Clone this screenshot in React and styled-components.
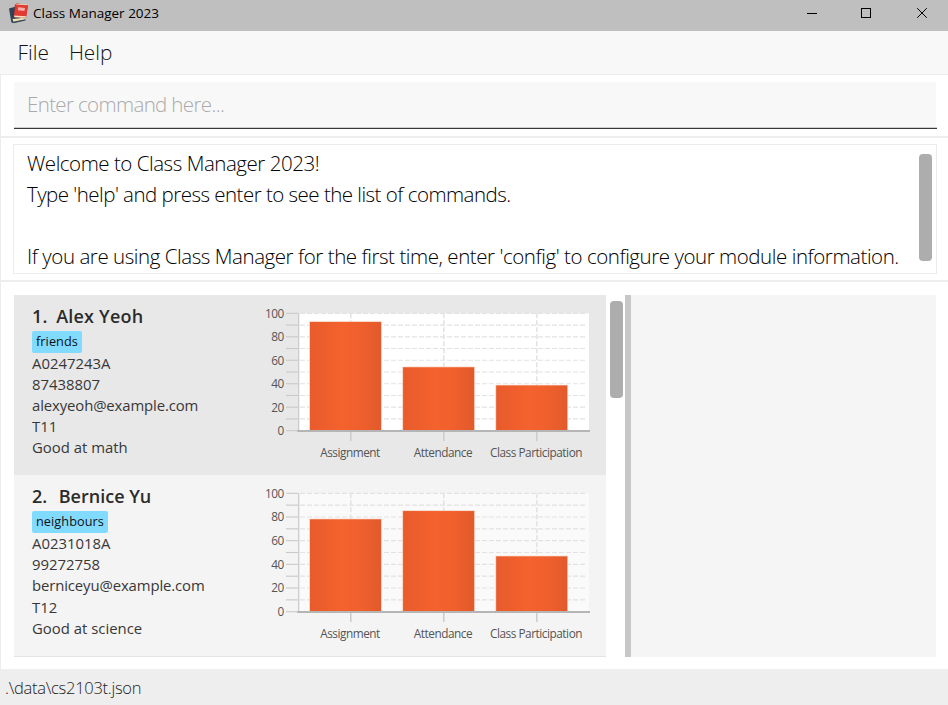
import React from 'react';
import styled, { createGlobalStyle } from 'styled-components';

const GlobalStyle = createGlobalStyle`
  * { box-sizing: border-box; }
  body {
    margin: 0;
    overflow: hidden;
    background: #fff;
    font-family: "Open Sans", "Noto Sans", sans-serif;
    color: #222;
  }
`;

const Window = styled.div`
  display: flex;
  flex-direction: column;
  width: 948px;
  height: 705px;
  background: #fff;
`;

const TitleBar = styled.header`
  display: flex;
  align-items: center;
  flex: 0 0 31px;
  padding: 0 20px 4px 8px;
  background: #bfbfbf;
`;

const AppTitle = styled.h1`
  flex: 1;
  margin: 0 0 0 4px;
  font-size: 13.5px;
  font-weight: 400;
  line-height: 27px;
  color: #000;
`;

const WindowControls = styled.div`
  display: grid;
  grid-template-columns: 54px 56px 11px;
`;

const MenuBar = styled.nav`
  display: flex;
  gap: 20px;
  flex: 0 0 44px;
  padding: 0 17.6px;
  background: #f8f8f8;
  border-bottom: 1px solid #ededed;
`;

const MenuItem = styled.span`
  font-size: 20.8px;
  font-weight: 300;
  line-height: 43px;
  color: #111;
`;

const Body = styled.main`
  display: flex;
  flex-direction: column;
  flex: 0 0 594px;
  border-left: 1px solid #ededed;
`;

const CommandSection = styled.section`
  flex: 0 0 63px;
  padding: 7px 11px 0 13px;
  border-bottom: 2px solid #eee;
`;

const CommandField = styled.div`
  height: 47px;
  padding: 0 13px;
  background: linear-gradient(#f8f8f8, #f8f8f8) no-repeat 0 0 / calc(100% - 1px) 100%;
  border-bottom: 1px solid #383838;
  box-shadow: inset 0 -1px 0 #cfcfcf;
  font-size: 20.5px;
  font-weight: 300;
  line-height: 44px;
  letter-spacing: -0.64px;
  color: #aaa;
`;

const ResultSection = styled.section`
  flex: 0 0 144px;
  padding: 6px 11px 0 12px;
  border-bottom: 2px solid #eee;
`;

const ResultBox = styled.div`
  display: flex;
  justify-content: space-between;
  height: 130px;
  padding: 3px 4px 0 13px;
  border: 1px solid #ececec;
`;

const ResultText = styled.div`
  font-size: 20.5px;
  font-weight: 300;
  color: #000;
`;

const ResultLine = styled.p`
  height: 31px;
  margin: 0;
  line-height: 31px;
  letter-spacing: ${(p) => p.$tracking}px;
  white-space: pre;
`;

const ScrollThumb = styled.div`
  width: 13px;
  height: ${(p) => p.$length}px;
  margin-top: ${(p) => p.$offset}px;
  border-radius: 4px;
  background: #adadad;
`;

const SplitView = styled.section`
  display: flex;
  height: 375px;
  padding: 13px 12px 0 13px;
`;

const StudentList = styled.div`
  flex: 0 0 592px;
  height: 362px;
`;

const ListScroll = styled.div`
  display: flex;
  justify-content: center;
  flex: 0 0 19px;
  padding-left: 1px;
`;

const Divider = styled.div`
  flex: 0 0 6px;
  height: 362px;
  background: #c7c7c7;
`;

const DetailPanel = styled.aside`
  flex: 1;
  height: 362px;
  background: #f5f5f5;
`;

const Card = styled.article`
  display: flex;
  height: ${(p) => (p.$selected ? 180 : 182)}px;
  padding-left: 18px;
  background: ${(p) => (p.$selected ? '#e8e8e8' : '#f4f4f4')};
  border-bottom: ${(p) => (p.$selected ? 'none' : '1px solid #e4e4e4')};
`;

const CardInfo = styled.div`
  flex: 0 0 228px;
  padding-top: 9px;
`;

const StudentName = styled.h2`
  display: flex;
  gap: ${(p) => p.$gap}px;
  margin: 0 0 3px;
  font-size: 18px;
  font-weight: 600;
  line-height: 24px;
  letter-spacing: ${(p) => p.$tracking}px;
  color: #2b2b2b;
`;

const Tag = styled.span`
  display: block;
  width: fit-content;
  height: 22px;
  padding: 0 4px;
  border-radius: 2px;
  background: #81dbff;
  font-size: 12.7px;
  line-height: 21px;
  letter-spacing: 0.08px;
  color: #111;
`;

const InfoLine = styled.p`
  margin: 0;
  font-size: 14.9px;
  line-height: ${(p) => p.$pitch}px;
  letter-spacing: ${(p) => (p.$tight ? -0.12 : 0)}px;
  color: #383838;
`;

const ChartSvg = styled.svg`
  display: block;
  width: 346px;
  height: 180px;
`;

const ChartLabel = styled.text`
  font-size: 11.8px;
  letter-spacing: -0.46px;
  fill: #555;
`;

const StatusBar = styled.footer`
  flex: 1;
  padding-left: 5px;
  background: #eee;
  font-size: 16.5px;
  font-weight: 300;
  line-height: 37px;
  letter-spacing: -0.28px;
  color: #222;
`;

const categories = ['Assignment', 'Attendance', 'Class Participation'];

const students = [
  {
    name: 'Alex Yeoh',
    gap: 8.6,
    tracking: 0.2,
    tag: 'friends',
    lines: ['A0247243A', '87438807', 'alexyeoh@example.com', 'T11', 'Good at math'],
    pitch: 21,
    scores: [92.6, 54, 38.5],
    base: 135.7,
    selected: true,
  },
  {
    name: 'Bernice Yu',
    gap: 11.5,
    tracking: 0,
    tag: 'neighbours',
    lines: ['A0231018A', '99272758', 'berniceyu@example.com', 'T12', 'Good at science'],
    pitch: 21.2,
    scores: [78, 85, 46.7],
    base: 136.7,
    selected: false,
  },
];

function BooksIcon() {
  return (
    <svg width="21" height="21" viewBox="0 0 21 21">
      <path d="M1 5.5 L8 3.5 L13 18 L5 20 Q3.5 20 3.2 18.5 Z" fill="#2f4358" />
      <path d="M4.5 16 L15 15 L17.5 16.5 L5.5 19.5 Z" fill="#f3dfb0" />
      <path d="M4.8 18.8 L17.5 16.2 L17.5 17.4 L5.5 20.2 Z" fill="#35485a" />
      <path d="M6.8 2.3 L8.4 0.3 L20 2.2 L18 15 L6 14.2 Z" fill="#b92f2a" />
      <path d="M7.8 1.5 L20 2.2 L18.2 13.2 L6.2 12.5 Z" fill="#e23b32" />
      <path d="M6 12.6 L18.2 13.3 L17.8 14.8 L6.5 14.2 Z" fill="#f5e5c6" />
      <path d="M10.3 4.3 L17 4.9 L16.5 7.9 L9.9 7.3 Z" fill="#f0b0a8" />
      <path d="M8.2 0.7 L18.8 1.4 L19.6 2.3 L8 1.6 Z" fill="#f5e5c6" />
    </svg>
  );
}

function MinimizeIcon() {
  return (
    <svg width="11" height="11" viewBox="0 0 11 11">
      <path d="M0 5.5 H10" stroke="#000" />
    </svg>
  );
}

function MaximizeIcon() {
  return (
    <svg width="11" height="11" viewBox="0 0 11 11">
      <rect x="0.5" y="0.5" width="9" height="9" fill="none" stroke="#000" />
    </svg>
  );
}

function CloseIcon() {
  return (
    <svg width="11" height="11" viewBox="0 0 11 11">
      <path d="M0.2 0.2 L9.8 9.8 M9.8 0.2 L0.2 9.8" stroke="#000" />
    </svg>
  );
}

function ScoreChart({ scores, base, selected }) {
  const top = 18.3;
  const left = 39;
  const right = 329;
  const step = (base - top) / 10;
  const gradientId = `bar-${selected ? 'selected' : 'plain'}`;
  const rows = Array.from({ length: 11 }, (_, i) => i);
  return (
    <ChartSvg viewBox="0 0 346 180">
      <defs>
        <linearGradient id={gradientId}>
          <stop offset="0" stopColor="#e85b2c" />
          <stop offset="0.45" stopColor="#f4622d" />
          <stop offset="0.7" stopColor="#f0602d" />
          <stop offset="1" stopColor="#e25a2b" />
        </linearGradient>
      </defs>
      <rect x={left} y={top} width={right - left} height={base - top} fill={selected ? '#fff' : '#fafafa'} />
      {rows.map((i) => {
        const y = base - i * step;
        return (
          <g key={i}>
            <path d={`M26 ${y} H38`} stroke="#c9c9c9" strokeWidth="1.1" />
            {i > 0 && (
              <path d={`M40 ${y} H${right - 2}`} stroke="#e2e2e2" strokeWidth="1.2" strokeDasharray="5 2" />
            )}
            {i % 2 === 0 && (
              <ChartLabel x="23.8" y={y + 4.3} textAnchor="end">{i * 10}</ChartLabel>
            )}
          </g>
        );
      })}
      {categories.map((name, i) => {
        const x = 90.8 + i * 93;
        const height = ((base - top) * scores[i]) / 100;
        return (
          <g key={name}>
            <path d={`M${x} ${top} V${base}`} stroke="#e4e4e4" strokeWidth="1.6" strokeDasharray="5 2" />
            <path d={`M${x} ${base + 1} V${base + 10.3}`} stroke="#cdcdcd" strokeWidth="1.6" />
            <rect x={49.3 + i * 93.1} y={base - height - 0.6} width="72.4" height={height} fill="#f8c2ad" />
            <rect x={50 + i * 93.1} y={base - height} width="71" height={height} fill={`url(#${gradientId})`} />
            <ChartLabel x={x - 0.8} y={base + 25.8} textAnchor="middle">{name}</ChartLabel>
          </g>
        );
      })}
      <path d={`M38.7 ${top} V${base}`} stroke="#c9c9c9" strokeWidth="1.2" />
      <path d={`M37.3 ${base + 0.3} H330`} stroke="#b5b5b5" strokeWidth="2" />
    </ChartSvg>
  );
}

function StudentCard({ index, student }) {
  return (
    <Card $selected={student.selected}>
      <CardInfo>
        <StudentName $gap={student.gap} $tracking={student.tracking}>
          <span>{index}.</span>
          <span>{student.name}</span>
        </StudentName>
        <Tag>{student.tag}</Tag>
        {student.lines.map((line) => (
          <InfoLine key={line} $pitch={student.pitch} $tight={line.includes('@')}>{line}</InfoLine>
        ))}
      </CardInfo>
      <ScoreChart scores={student.scores} base={student.base} selected={student.selected} />
    </Card>
  );
}

const resultLines = [
  { text: 'Welcome to Class Manager 2023!', tracking: -0.46 },
  { text: "Type 'help' and press enter to see the list of commands.", tracking: -0.52 },
  { text: '', tracking: 0 },
  {
    text: "If you are using Class Manager for the first time, enter 'config' to configure your module information.",
    tracking: -0.44,
  },
];

export default function App() {
  return (
    <>
      <GlobalStyle />
      <Window>
        <TitleBar>
          <BooksIcon />
          <AppTitle>Class Manager 2023</AppTitle>
          <WindowControls>
            <MinimizeIcon />
            <MaximizeIcon />
            <CloseIcon />
          </WindowControls>
        </TitleBar>
        <MenuBar>
          <MenuItem>File</MenuItem>
          <MenuItem>Help</MenuItem>
        </MenuBar>
        <Body>
          <CommandSection>
            <CommandField>Enter command here...</CommandField>
          </CommandSection>
          <ResultSection>
            <ResultBox>
              <ResultText>
                {resultLines.map((line, i) => (
                  <ResultLine key={i} $tracking={line.tracking}>{line.text}</ResultLine>
                ))}
              </ResultText>
              <ScrollThumb $length={107} $offset={5.5} />
            </ResultBox>
          </ResultSection>
          <SplitView>
            <StudentList>
              {students.map((student, i) => (
                <StudentCard key={student.name} index={i + 1} student={student} />
              ))}
            </StudentList>
            <ListScroll>
              <ScrollThumb $length={97} $offset={5.5} />
            </ListScroll>
            <Divider />
            <DetailPanel />
          </SplitView>
        </Body>
        <StatusBar>.\data\cs2103t.json</StatusBar>
      </Window>
    </>
  );
}
